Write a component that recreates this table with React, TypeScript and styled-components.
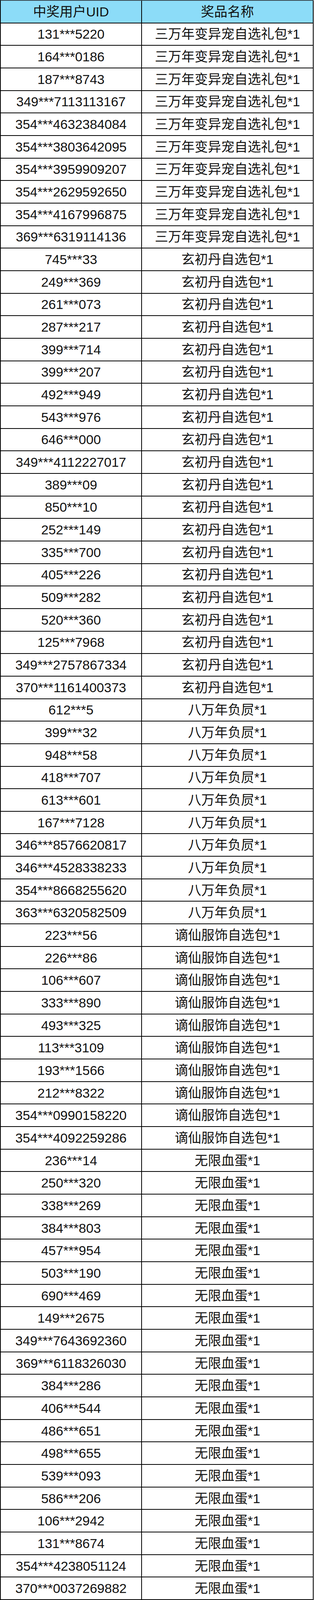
import React from 'react';
import styled, { createGlobalStyle } from 'styled-components';

const GlobalStyle = createGlobalStyle`
  html, body {
    margin: 0;
    padding: 0;
    background: #ffffff;
  }
  body {
    font-family: "Liberation Sans", Arial, "Noto Sans CJK SC", sans-serif;
    color: #111;
  }
  *, *::before, *::after {
    box-sizing: border-box;
  }
`;

// the table fills the window height, one equal share per row
const Table = styled.div<{ $rows: number }>`
  display: grid;
  grid-template-columns: 362px 440px;
  grid-template-rows: repeat(${p => p.$rows}, 1fr);
  width: 804px;
  height: 100vh;
  max-height: 4262px;
  border-left: 2px solid #000;
  border-top: 2px solid #3b4a52;
`;

const Cell = styled.div<{ $head?: boolean }>`
  display: flex;
  align-items: center;
  justify-content: center;
  min-height: 0;
  border-right: 2px solid #000;
  border-bottom: 2px solid #000;
  background: ${p => (p.$head ? '#8cdcf8' : '#ffffff')};
  font-size: 34px;
  line-height: 1;
  white-space: nowrap;
`;

const groups: { prize: string; uids: string[] }[] = [
  {
    prize: '三万年变异宠自选礼包*1',
    uids: [
      '131***5220', '164***0186', '187***8743', '349***7113113167', '354***4632384084',
      '354***3803642095', '354***3959909207', '354***2629592650', '354***4167996875', '369***6319114136',
    ],
  },
  {
    prize: '玄初丹自选包*1',
    uids: [
      '745***33', '249***369', '261***073', '287***217', '399***714', '399***207', '492***949',
      '543***976', '646***000', '349***4112227017', '389***09', '850***10', '252***149', '335***700',
      '405***226', '509***282', '520***360', '125***7968', '349***2757867334', '370***1161400373',
    ],
  },
  {
    prize: '八万年负屃*1',
    uids: [
      '612***5', '399***32', '948***58', '418***707', '613***601', '167***7128', '346***8576620817',
      '346***4528338233', '354***8668255620', '363***6320582509',
    ],
  },
  {
    prize: '谪仙服饰自选包*1',
    uids: [
      '223***56', '226***86', '106***607', '333***890', '493***325', '113***3109', '193***1566',
      '212***8322', '354***0990158220', '354***4092259286',
    ],
  },
  {
    prize: '无限血蛋*1',
    uids: [
      '236***14', '250***320', '338***269', '384***803', '457***954', '503***190', '690***469',
      '149***2675', '349***7643692360', '369***6118326030', '384***286', '406***544', '486***651',
      '498***655', '539***093', '586***206', '106***2942', '131***8674', '354***4238051124',
      '370***0037269882',
    ],
  },
];

const winners = groups.flatMap(g => g.uids.map(uid => ({ uid, prize: g.prize })));

const App: React.FC = () => {
  return (
    <>
      <GlobalStyle />
      <Table $rows={winners.length + 1}>
        <Cell $head>中奖用户UID</Cell>
        <Cell $head>奖品名称</Cell>
        {winners.map((w, i) => (
          <React.Fragment key={i}>
            <Cell>{w.uid}</Cell>
            <Cell>{w.prize}</Cell>
          </React.Fragment>
        ))}
      </Table>
    </>
  );
};

export default App;
